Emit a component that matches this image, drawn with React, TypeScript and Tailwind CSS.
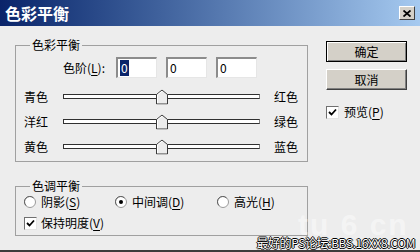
import React from "react";

const FONT = "font-['Noto_Sans_CJK_SC','Liberation_Sans',sans-serif]";

function Key({ k }: { k: string }) {
  return (
    <>
      (<span className="underline underline-offset-2">{k}</span>)
    </>
  );
}

function Radio({ checked }: { checked?: boolean }) {
  return (
    <svg width="12" height="12" viewBox="0 0 12 12" className="shrink-0">
      <circle cx="6" cy="6" r="5.5" fill="#fff" stroke="#9a9a9a" />
      <path d="M2 9.5 A5 5 0 0 1 9.5 2" fill="none" stroke="#606060" />
      {checked && <circle cx="6" cy="6" r="2" fill="#000" />}
    </svg>
  );
}

function Check() {
  return (
    <div className="w-[13px] h-[13px] shrink-0 bg-white border border-t-[#707070] border-l-[#707070] border-b-[#e4e4e4] border-r-[#e4e4e4] flex items-center justify-center">
      <svg width="9" height="9" viewBox="0 0 9 9">
        <path d="M1 4 L3.5 6.5 L8 1.5" fill="none" stroke="#000" strokeWidth="1.8" />
      </svg>
    </div>
  );
}

function Field({ selected }: { selected?: boolean }) {
  return (
    <div className="w-[41px] h-[21px] bg-white border-t-2 border-l-2 border-[#8c8c8c] border-b border-r border-b-[#e6e6e6] border-r-[#e6e6e6] flex items-center pl-[2px] text-[12px] leading-none">
      {selected ? (
        <span className="bg-[#0a246a] text-white px-[1px] py-[2px]">0</span>
      ) : (
        <span className="text-black">0</span>
      )}
    </div>
  );
}

function SliderRow({ left, right }: { left: string; right: string }) {
  return (
    <div className="flex items-center h-[25px]">
      <span className="w-[39px]">{left}</span>
      <div className="relative w-[197px] h-[5px] bg-white border border-t-[#303030] border-l-[#303030] border-b-[#303030] border-r-[#808080]">
        <svg
          width="12"
          height="15"
          viewBox="0 0 12 15"
          className="absolute left-1/2 top-1/2 -translate-x-1/2 -translate-y-1/2"
        >
          <path d="M0.5 14.5 V5 L6 0.5 L11.5 5 V14.5 Z" fill="#ececec" stroke="#3a3a3a" />
          <path d="M1.5 13.5 V5.4 L6 1.7" fill="none" stroke="#fff" />
        </svg>
      </div>
      <span className="ml-[14px]">{right}</span>
    </div>
  );
}

export default function App() {
  return (
    <div className={`${FONT} relative w-[420px] h-[252px] bg-[#ededed] flex flex-col overflow-hidden border-b-2 border-[#3c3c3c] text-[12px] text-black`}>
      {/* Title bar */}
      <div className="h-[26px] shrink-0 bg-linear-to-r from-[#0a246a] to-[#a6caf0] flex items-center justify-between pl-[5px] pr-[5px]">
        <span className="text-white font-bold text-[16px] leading-none">色彩平衡</span>
        <div className="w-[16px] h-[14px] bg-[#d4d0c8] border border-t-white border-l-white border-b-[#404040] border-r-[#404040] flex items-center justify-center">
          <svg width="8" height="7" viewBox="0 0 8 7">
            <path d="M0.5 0.5 L7.5 6.5 M7.5 0.5 L0.5 6.5" stroke="#000" strokeWidth="1.8" />
          </svg>
        </div>
      </div>

      {/* Body */}
      <div className="flex flex-1 pt-[12px]">
        <div className="ml-[15px] w-[293px] flex flex-col">
          <fieldset className="border border-[#a0a0a0] pl-[8px] pr-[8px] pb-[2px]">
            <legend className="ml-[6px] px-[2px] leading-[14px]">色彩平衡</legend>
            <div className="flex items-center h-[21px] mt-[5px] pl-[39px]">
              <span>
                色阶<Key k="L" />:
              </span>
              <div className="ml-[11px] flex gap-[9px]">
                <Field selected />
                <Field />
                <Field />
              </div>
            </div>
            <div className="mt-[6px]">
              <SliderRow left="青色" right="红色" />
              <SliderRow left="洋红" right="绿色" />
              <SliderRow left="黄色" right="蓝色" />
            </div>
          </fieldset>

          <fieldset className="mt-[17px] border border-[#a0a0a0] pl-[8px] pr-[8px] pb-[2px]">
            <legend className="ml-[6px] px-[2px] leading-[14px]">色调平衡</legend>
            <div className="flex items-center h-[18px]">
              <div className="w-[91px] flex items-center">
                <Radio />
                <span className="ml-[5px]">
                  阴影<Key k="S" />
                </span>
              </div>
              <div className="w-[102px] flex items-center">
                <Radio checked />
                <span className="ml-[5px]">
                  中间调<Key k="D" />
                </span>
              </div>
              <div className="flex items-center">
                <Radio />
                <span className="ml-[5px]">
                  高光<Key k="H" />
                </span>
              </div>
            </div>
            <div className="flex items-center h-[20px] mt-[2px]">
              <Check />
              <span className="ml-[4px]">
                保持明度<Key k="V" />
              </span>
            </div>
          </fieldset>
        </div>

        {/* Right column */}
        <div className="ml-[18px] w-[81px] pt-[3px] flex flex-col">
          <button className="h-[21px] w-[81px] bg-[#d4d0c8] border border-black shadow-[inset_1px_1px_0_#fff,inset_-1px_-1px_0_#808080] leading-none">
            确定
          </button>
          <button className="mt-[7px] h-[21px] w-[81px] bg-[#d4d0c8] border border-t-white border-l-white border-b-[#404040] border-r-[#404040] shadow-[inset_-1px_-1px_0_#808080] leading-none">
            取消
          </button>
          <div className="mt-[13px] flex items-center">
            <Check />
            <span className="ml-[5px]">
              预览<Key k="P" />
            </span>
          </div>
        </div>
      </div>

      {/* Watermarks */}
      <div className="absolute left-[298px] top-[210px] whitespace-nowrap text-white/45 font-bold text-[30px] leading-none tracking-[2px] font-['Liberation_Sans',sans-serif]">
        tu 6 cn
      </div>
      <div className="absolute right-[5px] top-[236px] whitespace-nowrap text-white text-[12px] leading-[14px] tracking-[-0.4px] [text-shadow:1px_0_0_#000,-1px_0_0_#000,0_1px_0_#000,0_-1px_0_#000]">
        最好的PS论坛:BBS.16XX8.COM
      </div>
    </div>
  );
}
